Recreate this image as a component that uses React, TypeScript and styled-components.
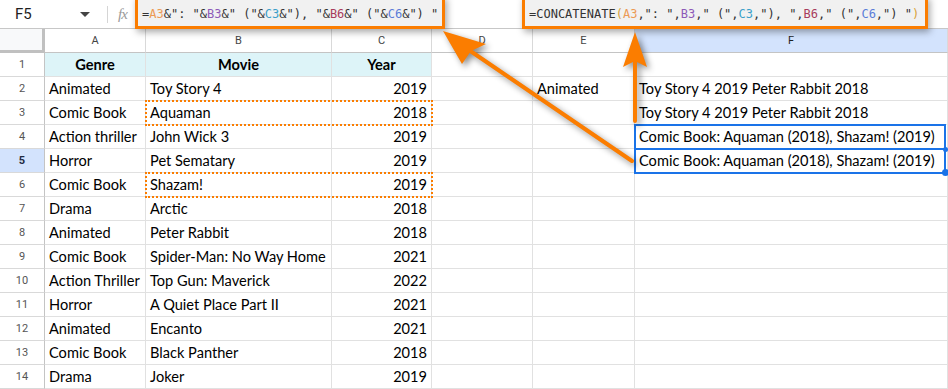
import React from 'react'
import styled, { createGlobalStyle } from 'styled-components'

const ORANGE = '#fb7d00'
const BLUE = '#1a73e8'

const GlobalStyle = createGlobalStyle`
  html, body { margin: 0; padding: 0; background: #fff; }
  body { width: 948px; height: 389px; overflow: hidden; }
`

const Page = styled.div`
  position: relative;
  width: 948px;
  height: 389px;
  overflow: hidden;
  display: flex;
  flex-direction: column;
  font-family: Roboto, 'Liberation Sans', sans-serif;
`

const FormulaBar = styled.div`
  height: 29px;
  box-sizing: border-box;
  border-bottom: 1px solid #c7c7c7;
  display: flex;
  align-items: center;
  background: #fff;
`

const NameBox = styled.div`
  width: 100px;
  display: flex;
  align-items: center;
  justify-content: space-between;
  padding: 0 10px 0 15px;
  box-sizing: border-box;
  font-size: 15px;
  color: #1f1f1f;
`

const Caret = styled.span`
  width: 0;
  height: 0;
  border-left: 5px solid transparent;
  border-right: 5px solid transparent;
  border-top: 5px solid #444;
`

const Divider = styled.span`
  width: 1px;
  height: 17px;
  background: #d5d5d5;
  margin: 0 10px 0 7px;
`

const Fx = styled.span`
  font-family: 'Liberation Serif', serif;
  font-style: italic;
  font-size: 15px;
  color: #9a9a9a;
  letter-spacing: -1px;
`

const Sheet = styled.div`
  display: grid;
  grid-template-columns: 45px 101px 186px 100px 101px 102px 1fr;
  grid-auto-rows: 24px;
`

const Corner = styled.div`
  background: #f8f9fa;
  border-right: 3px solid #c0c0c0;
  border-bottom: 3px solid #c0c0c0;
  box-sizing: border-box;
`

const ColHead = styled.div<{ $active?: boolean }>`
  box-sizing: border-box;
  border-right: 1px solid #d9d9d9;
  border-bottom: 1px solid #c4c4c4;
  background: ${(p) => (p.$active ? '#d3e3fd' : '#fff')};
  display: flex;
  align-items: center;
  justify-content: center;
  font-size: 11px;
  color: ${(p) => (p.$active ? '#1f1f1f' : '#444')};
`

const RowHead = styled.div<{ $active?: boolean }>`
  box-sizing: border-box;
  border-right: 1px solid #c4c4c4;
  border-bottom: 1px solid #d9d9d9;
  background: ${(p) => (p.$active ? '#d3e3fd' : '#fff')};
  display: flex;
  align-items: center;
  justify-content: center;
  font-size: 11px;
  color: ${(p) => (p.$active ? '#1f2a44' : '#555')};
  font-weight: ${(p) => (p.$active ? 700 : 400)};
`

const Cell = styled.div<{ $right?: boolean; $title?: boolean }>`
  box-sizing: border-box;
  border-right: 1px solid #e1e1e1;
  border-bottom: 1px solid #e1e1e1;
  background: ${(p) => (p.$title ? '#ddf4f8' : '#fff')};
  display: flex;
  align-items: center;
  justify-content: ${(p) => (p.$title ? 'center' : p.$right ? 'flex-end' : 'flex-start')};
  padding: 0 4px 0 4px;
  font-family: Lato, 'Open Sans', sans-serif;
  font-size: 14.6px;
  font-weight: ${(p) => (p.$title ? 700 : 400)};
  color: #000;
  white-space: nowrap;
  overflow: visible;
`

const Callout = styled.div<{ $left: number; $width: number }>`
  position: absolute;
  left: ${(p) => p.$left}px;
  top: -4px;
  width: ${(p) => p.$width}px;
  height: 33px;
  box-sizing: border-box;
  border: 3px solid ${ORANGE};
  background: #f1f1f1;
  box-shadow: 2px 3px 7px rgba(0, 0, 0, 0.35);
  display: flex;
  align-items: center;
  padding: 3px 0 0 4px;
  font-family: 'DejaVu Sans Mono', 'Liberation Mono', monospace;
  font-size: 12px;
  color: #333;
  white-space: pre;
`

const Ref = styled.span<{ $c: string }>`
  color: ${(p) => p.$c};
`

const Range = styled.div<{ $x: number; $y: number; $w: number; $h: number; $dotted?: boolean }>`
  position: absolute;
  left: ${(p) => p.$x}px;
  top: ${(p) => p.$y}px;
  width: ${(p) => p.$w}px;
  height: ${(p) => p.$h}px;
  box-sizing: border-box;
  border: 2px ${(p) => (p.$dotted ? 'dotted' : 'solid')} ${(p) => (p.$dotted ? ORANGE : BLUE)};
`

const Handle = styled.span<{ $x: number; $y: number; $s: number }>`
  position: absolute;
  left: ${(p) => p.$x - p.$s / 2}px;
  top: ${(p) => p.$y - p.$s / 2}px;
  width: ${(p) => p.$s}px;
  height: ${(p) => p.$s}px;
  border-radius: 50%;
  background: ${BLUE};
`

const ArrowLayer = styled.svg`
  position: absolute;
  left: 0;
  top: 0;
  pointer-events: none;
  filter: drop-shadow(3px 3px 3px rgba(0, 0, 0, 0.45));
`

const COLS = ['A', 'B', 'C', 'D', 'E', 'F']

const rows: [string, string, string, string, string][] = [
  ['Animated', 'Toy Story 4', '2019', 'Animated', 'Toy Story 4 2019 Peter Rabbit 2018'],
  ['Comic Book', 'Aquaman', '2018', '', 'Toy Story 4 2019 Peter Rabbit 2018'],
  ['Action thriller', 'John Wick 3', '2019', '', 'Comic Book: Aquaman (2018), Shazam! (2019)'],
  ['Horror', 'Pet Sematary', '2019', '', 'Comic Book: Aquaman (2018), Shazam! (2019)'],
  ['Comic Book', 'Shazam!', '2019', '', ''],
  ['Drama', 'Arctic', '2018', '', ''],
  ['Animated', 'Peter Rabbit', '2018', '', ''],
  ['Comic Book', 'Spider-Man: No Way Home', '2021', '', ''],
  ['Action Thriller', 'Top Gun: Maverick', '2022', '', ''],
  ['Horror', 'A Quiet Place Part II', '2021', '', ''],
  ['Animated', 'Encanto', '2021', '', ''],
  ['Comic Book', 'Black Panther', '2018', '', ''],
  ['Drama', 'Joker', '2019', '', ''],
]

// row r (1-based) top edge
const rowTop = (r: number) => 53 + (r - 1) * 24

const App = () => {
  return (
    <Page>
      <GlobalStyle />
      <FormulaBar>
        <NameBox>
          F5
          <Caret />
        </NameBox>
        <Divider />
        <Fx>fx</Fx>
      </FormulaBar>

      <Sheet>
        <Corner />
        {COLS.map((c) => (
          <ColHead key={c} $active={c === 'F'}>
            {c}
          </ColHead>
        ))}

        <RowHead>1</RowHead>
        <Cell $title>Genre</Cell>
        <Cell $title>Movie</Cell>
        <Cell $title>Year</Cell>
        <Cell />
        <Cell />
        <Cell />

        {rows.map((r, i) => (
          <React.Fragment key={i}>
            <RowHead $active={i + 2 === 5}>{i + 2}</RowHead>
            <Cell>{r[0]}</Cell>
            <Cell>{r[1]}</Cell>
            <Cell $right>{r[2]}</Cell>
            <Cell />
            <Cell>{r[3]}</Cell>
            <Cell>{r[4]}</Cell>
          </React.Fragment>
        ))}
      </Sheet>

      <Range $dotted $x={145} $y={rowTop(3) - 1} $w={288} $h={26} />
      <Range $dotted $x={145} $y={rowTop(6) - 1} $w={288} $h={26} />
      <Range $x={634} $y={rowTop(4) - 1} $w={312} $h={26} />
      <Range $x={634} $y={rowTop(5) - 1} $w={312} $h={26} />
      <Handle $x={945} $y={rowTop(5)} $s={5} />
      <Handle $x={945} $y={rowTop(6) - 1} $s={7} />

      <Callout $left={135} $width={310}>
        ={<Ref $c="#ec9a55">A3</Ref>}&amp;": "&amp;<Ref $c="#8d5ab8">B3</Ref>&amp;" ("&amp;
        <Ref $c="#3b9fc9">C3</Ref>&amp;"), "&amp;<Ref $c="#a83c5c">B6</Ref>&amp;" ("&amp;
        <Ref $c="#5b7dd8">C6</Ref>&amp;") "
      </Callout>

      <Callout $left={522} $width={406}>
        =CONCATENATE<Ref $c="#d8a23a">(</Ref>
        <Ref $c="#ec9a55">A3</Ref>,": ",<Ref $c="#8d5ab8">B3</Ref>," (",<Ref $c="#3b9fc9">C3</Ref>,"), ",
        <Ref $c="#a83c5c">B6</Ref>," (",<Ref $c="#5b7dd8">C6</Ref>,") "<Ref $c="#d8a23a">)</Ref>
      </Callout>

      <ArrowLayer width={948} height={389} viewBox="0 0 948 389">
        <g fill={ORANGE} stroke={ORANGE} strokeLinecap="round">
          <line x1={632} y1={161} x2={466} y2={48} strokeWidth={4} />
          <polygon points="443,31 486,44 471,51 462,64" stroke="none" />
          <line x1={635} y1={121} x2={635} y2={58} strokeWidth={4} />
          <polygon points="635,32 647,67 635,61 623,67" stroke="none" />
        </g>
      </ArrowLayer>
    </Page>
  )
}

export default App
